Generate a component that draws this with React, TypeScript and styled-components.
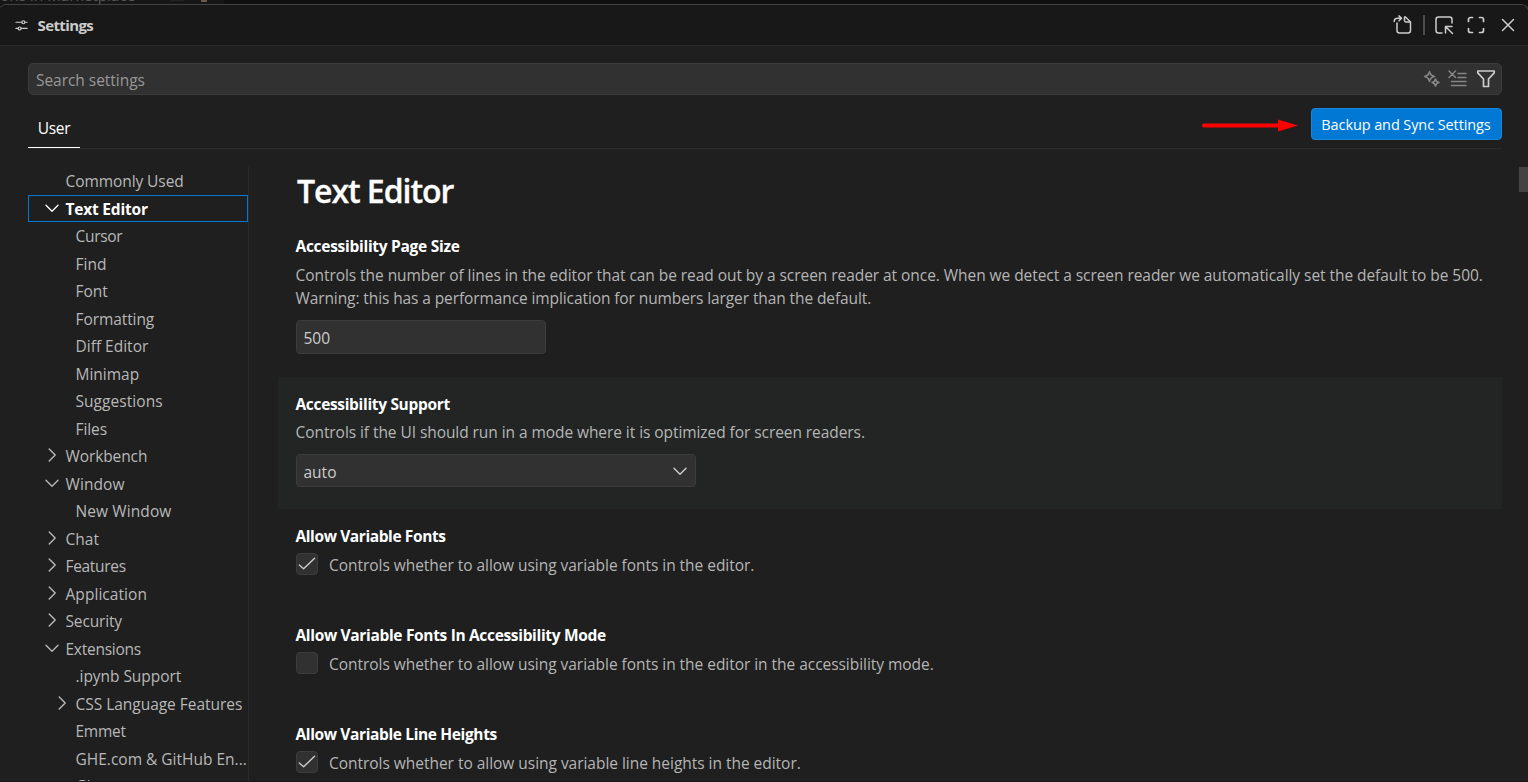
import React from "react";
import styled, { createGlobalStyle, css } from "styled-components";

const Global = createGlobalStyle`
  html, body { margin: 0; padding: 0; background: #1f1f1f; }
  * { box-sizing: border-box; }
  body {
    font-family: "Open Sans", "Noto Sans", sans-serif;
    font-size: 15.5px;
    color: #cccccc;
    overflow: hidden;
  }
`;

const Screen = styled.div`
  width: 1528px;
  height: 782px;
  display: flex;
  flex-direction: column;
  overflow: hidden;
  background: #101010;
  border-bottom: 1px solid #1b181a;
`;

const Backdrop = styled.div`
  flex: none;
  height: 4px;
  display: flex;
  align-items: flex-end;
  overflow: hidden;
  color: #575757;
  line-height: 20px;
  white-space: nowrap;
  font-size: 15.5px;
`;

const BackdropSide = styled.div`
  flex: none;
  width: 224px;
  height: 4px;
  display: flex;
  align-items: flex-end;
  background: #161616;
`;

const BackdropText = styled.span`
  width: 175px;
  margin-bottom: -1px;
  letter-spacing: -0.1px;
`;

const BackdropChip = styled.i<{ $width: number; $height: number; $color: string }>`
  width: ${(p) => p.$width}px;
  height: ${(p) => p.$height}px;
  margin: 0 17px auto 0;
  background: ${(p) => p.$color};
`;

const Panel = styled.div`
  flex: 1;
  min-height: 0;
  display: flex;
  flex-direction: column;
  margin: 0 -1px 0 -2px;
  padding: 0 0 0 1px;
  border: 1px solid #414141;
  border-bottom: none;
  border-radius: 8px 8px 0 0;
  background: #1f1f1f;
  overflow: hidden;
`;

const TitleBar = styled.header`
  flex: none;
  height: 41px;
  margin-left: -1px;
  display: flex;
  align-items: center;
  padding: 0 10px 0 16px;
  background: #181818;
  border-bottom: 1px solid #2b2b2b;
`;

const Title = styled.h2`
  flex: 1;
  margin: 0 0 0 9.5px;
  font-size: 15px;
  font-weight: 700;
  letter-spacing: -0.6px;
`;

const Actions = styled.div`
  display: flex;
  align-items: center;
  color: #cccccc;
`;

const Separator = styled.i`
  width: 2px;
  height: 20px;
  margin: 0 9px 0 10px;
  background: #4a4a4a;
`;

const Icon = styled.svg<{ $size?: number; $gap?: number; $dim?: boolean; $stroke?: number }>`
  flex: none;
  width: ${(p) => p.$size ?? 20}px;
  height: ${(p) => p.$size ?? 20}px;
  margin-left: ${(p) => p.$gap ?? 0}px;
  fill: none;
  stroke: ${(p) => (p.$dim ? "#858585" : "#cccccc")};
  stroke-width: ${(p) => p.$stroke ?? 1.5};
  stroke-linecap: round;
  stroke-linejoin: round;
`;

const SearchBox = styled.div`
  flex: none;
  height: 32px;
  margin: 17px 26px 0 28px;
  padding: 0 5px 0 7px;
  display: flex;
  align-items: center;
  background: #313131;
  border: 1px solid #3c3c3c;
  border-radius: 5px;
`;

const Placeholder = styled.span`
  flex: 1;
  margin-top: 2px;
  letter-spacing: -0.04px;
  color: #989898;
`;

const TabRow = styled.nav`
  flex: none;
  height: 54px;
  margin: 0 26px 0 28px;
  display: flex;
  justify-content: space-between;
  border-bottom: 1px solid #2b2b2b;
`;

const Tab = styled.div`
  width: 52px;
  height: 53px;
  padding-top: 22px;
  line-height: 22px;
  text-align: center;
  letter-spacing: -0.35px;
  color: #ffffff;
  border-bottom: 1px solid #ffffff;
`;

const SyncArea = styled.div`
  display: flex;
  align-items: flex-start;
  padding-top: 13px;
`;

const Arrow = styled.svg`
  width: 97px;
  height: 14px;
  margin: 11px 13px 0 0;
`;

const SyncButton = styled.button`
  width: 191px;
  height: 32px;
  padding: 1px 1px 0 0;
  border: 1px solid #1a86da;
  border-radius: 4px;
  background: #0078d4;
  color: #ffffff;
  font: inherit;
  font-size: 14.5px;
  letter-spacing: -0.1px;
  white-space: nowrap;
`;

const Content = styled.div`
  flex: 1;
  min-height: 0;
  display: flex;
  overflow: hidden;
`;

const Tree = styled.aside`
  flex: none;
  width: 221px;
  margin: 18px 0 0 28px;
  border-right: 1px solid #2b2b2b;
  overflow: hidden;
`;

const TreeRow = styled.div<{ $depth: number; $selected?: boolean }>`
  height: 27.5px;
  display: flex;
  align-items: center;
  padding-top: 1px;
  padding-left: ${(p) => (p.$depth === 0 ? 16 : 26)}px;
  color: #b8b8b8;
  white-space: nowrap;
  ${(p) =>
    p.$selected &&
    css`
      color: #ffffff;
      font-weight: 700;
      outline: 1px solid #0078d4;
      outline-offset: -1px;
    `}
`;

const Twistie = styled.svg`
  flex: none;
  width: 16px;
  height: 16px;
  margin: -2px 5.5px 0 0;
  fill: none;
  stroke: currentColor;
  stroke-width: 1.4;
  stroke-linecap: round;
  stroke-linejoin: round;
`;

const Label = styled.span<{ $track?: number }>`
  letter-spacing: ${(p) => p.$track ?? 0}px;
`;

const Main = styled.main`
  flex: 1;
  min-width: 0;
  display: flex;
  flex-direction: column;
  margin-left: 29px;
`;

const Heading = styled.h1`
  flex: none;
  height: 70px;
  margin: 0;
  padding: 18px 0 0 19px;
  font-size: 32px;
  line-height: 48px;
  font-weight: 650;
  letter-spacing: -1.05px;
  color: #ffffff;
  -webkit-text-stroke: 0.3px #ffffff;
`;

const Setting = styled.section<{ $height: number; $focused?: boolean }>`
  flex: none;
  height: ${(p) => p.$height}px;
  margin-right: 26px;
  padding: 15px 0 0 17.5px;
  background: ${(p) => (p.$focused ? "#222524" : "transparent")};
`;

const SettingTitle = styled.h3<{ $track: number }>`
  margin: 0;
  font-size: 15.5px;
  line-height: 24px;
  font-weight: 700;
  letter-spacing: ${(p) => p.$track}px;
  color: #ffffff;
`;

const Description = styled.p<{ $gap: number }>`
  margin: ${(p) => p.$gap}px 0 0;
  line-height: 23px;
  color: #b5b5b5;
  white-space: nowrap;
`;

const Field = styled.div<{ $width: number; $height: number }>`
  width: ${(p) => p.$width}px;
  height: ${(p) => p.$height}px;
  margin-top: 10px;
  padding: 2px 7px 0;
  display: flex;
  align-items: center;
  justify-content: space-between;
  background: #313131;
  border: 1px solid #3c3c3c;
  border-radius: 4px;

  svg {
    margin-right: 0;
  }
`;

const CheckLine = styled.div`
  display: flex;
  margin-top: 5px;
  line-height: 25px;
  color: #b5b5b5;
  white-space: nowrap;
`;

const Checkbox = styled.span`
  width: 22px;
  height: 22px;
  margin: 0 11.5px 0 0;
  display: flex;
  border: 1px solid #3c3c3c;
  border-radius: 4px;
  background: #313131;
`;

const Gutter = styled.div`
  flex: none;
  width: 9px;
  margin-left: -9px;
  padding-top: 18px;
`;

const Thumb = styled.div`
  width: 9px;
  height: 25px;
  background: #434343;
`;

type Node = { text: string; depth?: number; twistie?: "open" | "closed"; selected?: boolean; track?: number };

const tree: Node[] = [
  { text: "Commonly Used", track: -0.08 },
  { text: "Text Editor", twistie: "open", selected: true, track: -0.2 },
  { text: "Cursor", depth: 1, track: -0.3 },
  { text: "Find", depth: 1 },
  { text: "Font", depth: 1 },
  { text: "Formatting", depth: 1, track: -0.08 },
  { text: "Diff Editor", depth: 1 },
  { text: "Minimap", depth: 1 },
  { text: "Suggestions", depth: 1, track: 0.05 },
  { text: "Files", depth: 1, track: -0.1 },
  { text: "Workbench", twistie: "closed", track: -0.1 },
  { text: "Window", twistie: "open", track: 0.1 },
  { text: "New Window", depth: 1, track: 0.1 },
  { text: "Chat", twistie: "closed" },
  { text: "Features", twistie: "closed", track: -0.32 },
  { text: "Application", twistie: "closed", track: 0.05 },
  { text: "Security", twistie: "closed", track: -0.15 },
  { text: "Extensions", twistie: "open", track: -0.25 },
  { text: ".ipynb Support", depth: 1, track: -0.05 },
  { text: "CSS Language Features", depth: 1, twistie: "closed", track: -0.03 },
  { text: "Emmet", depth: 1, track: -0.25 },
  { text: "GHE.com & GitHub En...", depth: 1 },
  { text: "Git", depth: 1 },
];

const twistiePath = { open: "M2 5.2 L8 11.2 L14 5.2", closed: "M5.2 2 L11.2 8 L5.2 14" };

type BooleanProps = { title: string; text: string; checked?: boolean; track: number; textTrack: number };

function BooleanSetting({ title, text, checked, track, textTrack }: BooleanProps) {
  return (
    <Setting $height={99}>
      <SettingTitle $track={track}>{title}</SettingTitle>
      <CheckLine>
        <Checkbox>
          {checked && (
            <Icon viewBox="0 0 20 20" $size={20} $stroke={1.4}>
              <path d="M2.300 11 L6.600 14.800 L17.600 4.200" />
            </Icon>
          )}
        </Checkbox>
        <Label $track={textTrack}>{text}</Label>
      </CheckLine>
    </Setting>
  );
}

export default function App() {
  return (
    <Screen>
      <Global />
      <Backdrop>
        <BackdropSide>
          <BackdropText>ons in Marketplace</BackdropText>
          <BackdropChip $width={15} $height={1} $color="#242424" />
          <BackdropChip $width={6} $height={2} $color="#6b5a4c" />
        </BackdropSide>
      </Backdrop>
      <Panel>
        <TitleBar>
          <Icon viewBox="0 0 14 14" $size={13} $stroke={1.3}>
            <path d="M1 3.500h6.200M10.800 3.500H13M1 10.200h2.200M6.800 10.200H13" />
            <circle cx="9" cy="3.500" r="1.600" />
            <circle cx="5" cy="10.200" r="1.600" />
          </Icon>
          <Title>Settings</Title>
          <Actions>
            <Icon viewBox="0 0 20 20">
              <path d="M4 8v7.500a2.500 2.500 0 0 0 2.500 2.500h8.500a2.500 2.500 0 0 0 2.500-2.500V7L12.500 2H11.500v3.500A1.500 1.500 0 0 0 13 7h4.500M1.200 6.500C1.200 4 2.800 3.300 4.800 3.300h3.700M6 0.900l2.600 2.400L6 5.800" />
            </Icon>
            <Separator />
            <Icon viewBox="0 0 20 20">
              <path d="M8 18H4.500A2.500 2.500 0 0 1 2 15.500v-11A2.500 2.500 0 0 1 4.500 2h11A2.500 2.500 0 0 1 18 4.500V8M11.500 18v-6.500H18M11.500 11.500L18.500 18.500" />
            </Icon>
            <Icon viewBox="0 0 20 20" $gap={12} $stroke={1.7}>
              <path d="M2.500 6.500v-2a2 2 0 0 1 2-2h2M13.500 2.500h2a2 2 0 0 1 2 2v2M17.500 13.500v2a2 2 0 0 1-2 2h-2M6.500 17.500h-2a2 2 0 0 1-2-2v-2" />
            </Icon>
            <Icon viewBox="0 0 20 20" $gap={12}>
              <path d="M4.500 4.500l11 11M15.500 4.500l-11 11" />
            </Icon>
          </Actions>
        </TitleBar>
        <SearchBox>
          <Placeholder>Search settings</Placeholder>
          <Icon viewBox="0 0 20 20" $dim>
            <path d="M8.500 2.500Q9.300 6.700 13.500 7.500Q9.300 8.300 8.500 12.500Q7.700 8.300 3.500 7.500Q7.700 6.700 8.500 2.500ZM14.500 10Q15.100 12.900 18 13.500Q15.100 14.100 14.500 17Q13.900 14.100 11 13.500Q13.900 12.900 14.500 10Z" />
          </Icon>
          <Icon viewBox="0 0 20 20" $gap={6} $dim>
            <path d="M2 2l6.500 6.500M8.500 2L2 8.500M11 4.500h8M11 8.500h8M4.500 12.500H19M4.500 16.500H19" />
          </Icon>
          <Icon viewBox="0 0 20 20" $gap={9} $stroke={1.7}>
            <path d="M1.800 2h16.400v1.800L12.500 10v7.500h-5V10L1.800 3.800Z" />
          </Icon>
        </SearchBox>
        <TabRow>
          <Tab>User</Tab>
          <SyncArea>
            <Arrow viewBox="0 0 97 14">
              <path d="M3 6.500H80" stroke="#ff0000" strokeWidth="4" strokeLinecap="round" />
              <path d="M77 0.500L97 6.500L77 12.500Z" fill="#ff0000" />
            </Arrow>
            <SyncButton>Backup and Sync Settings</SyncButton>
          </SyncArea>
        </TabRow>
        <Content>
          <Tree>
            {tree.map((n) => (
              <TreeRow key={n.text} $depth={n.depth ?? 0} $selected={n.selected}>
                <Twistie viewBox="0 0 16 16">{n.twistie && <path d={twistiePath[n.twistie]} />}</Twistie>
                <Label $track={n.track}>{n.text}</Label>
              </TreeRow>
            ))}
          </Tree>
          <Main>
            <Heading>Text Editor</Heading>
            <Setting $height={158}>
              <SettingTitle $track={-0.28}>Accessibility Page Size</SettingTitle>
              <Description $gap={6}>
                <Label $track={-0.054}>
                  Controls the number of lines in the editor that can be read out by a screen reader at once. When we detect a
                  screen reader we automatically set the default to be 500.
                </Label>
                <br />
                <Label $track={-0.1}>Warning: this has a performance implication for numbers larger than the default.</Label>
              </Description>
              <Field $width={250} $height={34}>500</Field>
            </Setting>
            <Setting $height={132} $focused>
              <SettingTitle $track={-0.33}>Accessibility Support</SettingTitle>
              <Description $gap={5}>
                <Label $track={-0.067}>Controls if the UI should run in a mode where it is optimized for screen readers.</Label>
              </Description>
              <Field $width={400} $height={33}>
                auto
                <Twistie viewBox="0 0 16 16">
                  <path d={twistiePath.open} />
                </Twistie>
              </Field>
            </Setting>
            <BooleanSetting
              title="Allow Variable Fonts"
              text="Controls whether to allow using variable fonts in the editor."
              track={-0.4}
              textTrack={-0.04}
              checked
            />
            <BooleanSetting
              title="Allow Variable Fonts In Accessibility Mode"
              text="Controls whether to allow using variable fonts in the editor in the accessibility mode."
              track={-0.33}
              textTrack={-0.04}
            />
            <BooleanSetting
              title="Allow Variable Line Heights"
              text="Controls whether to allow using variable line heights in the editor."
              track={-0.37}
              textTrack={-0.03}
              checked
            />
          </Main>
          <Gutter>
            <Thumb />
          </Gutter>
        </Content>
      </Panel>
    </Screen>
  );
}
